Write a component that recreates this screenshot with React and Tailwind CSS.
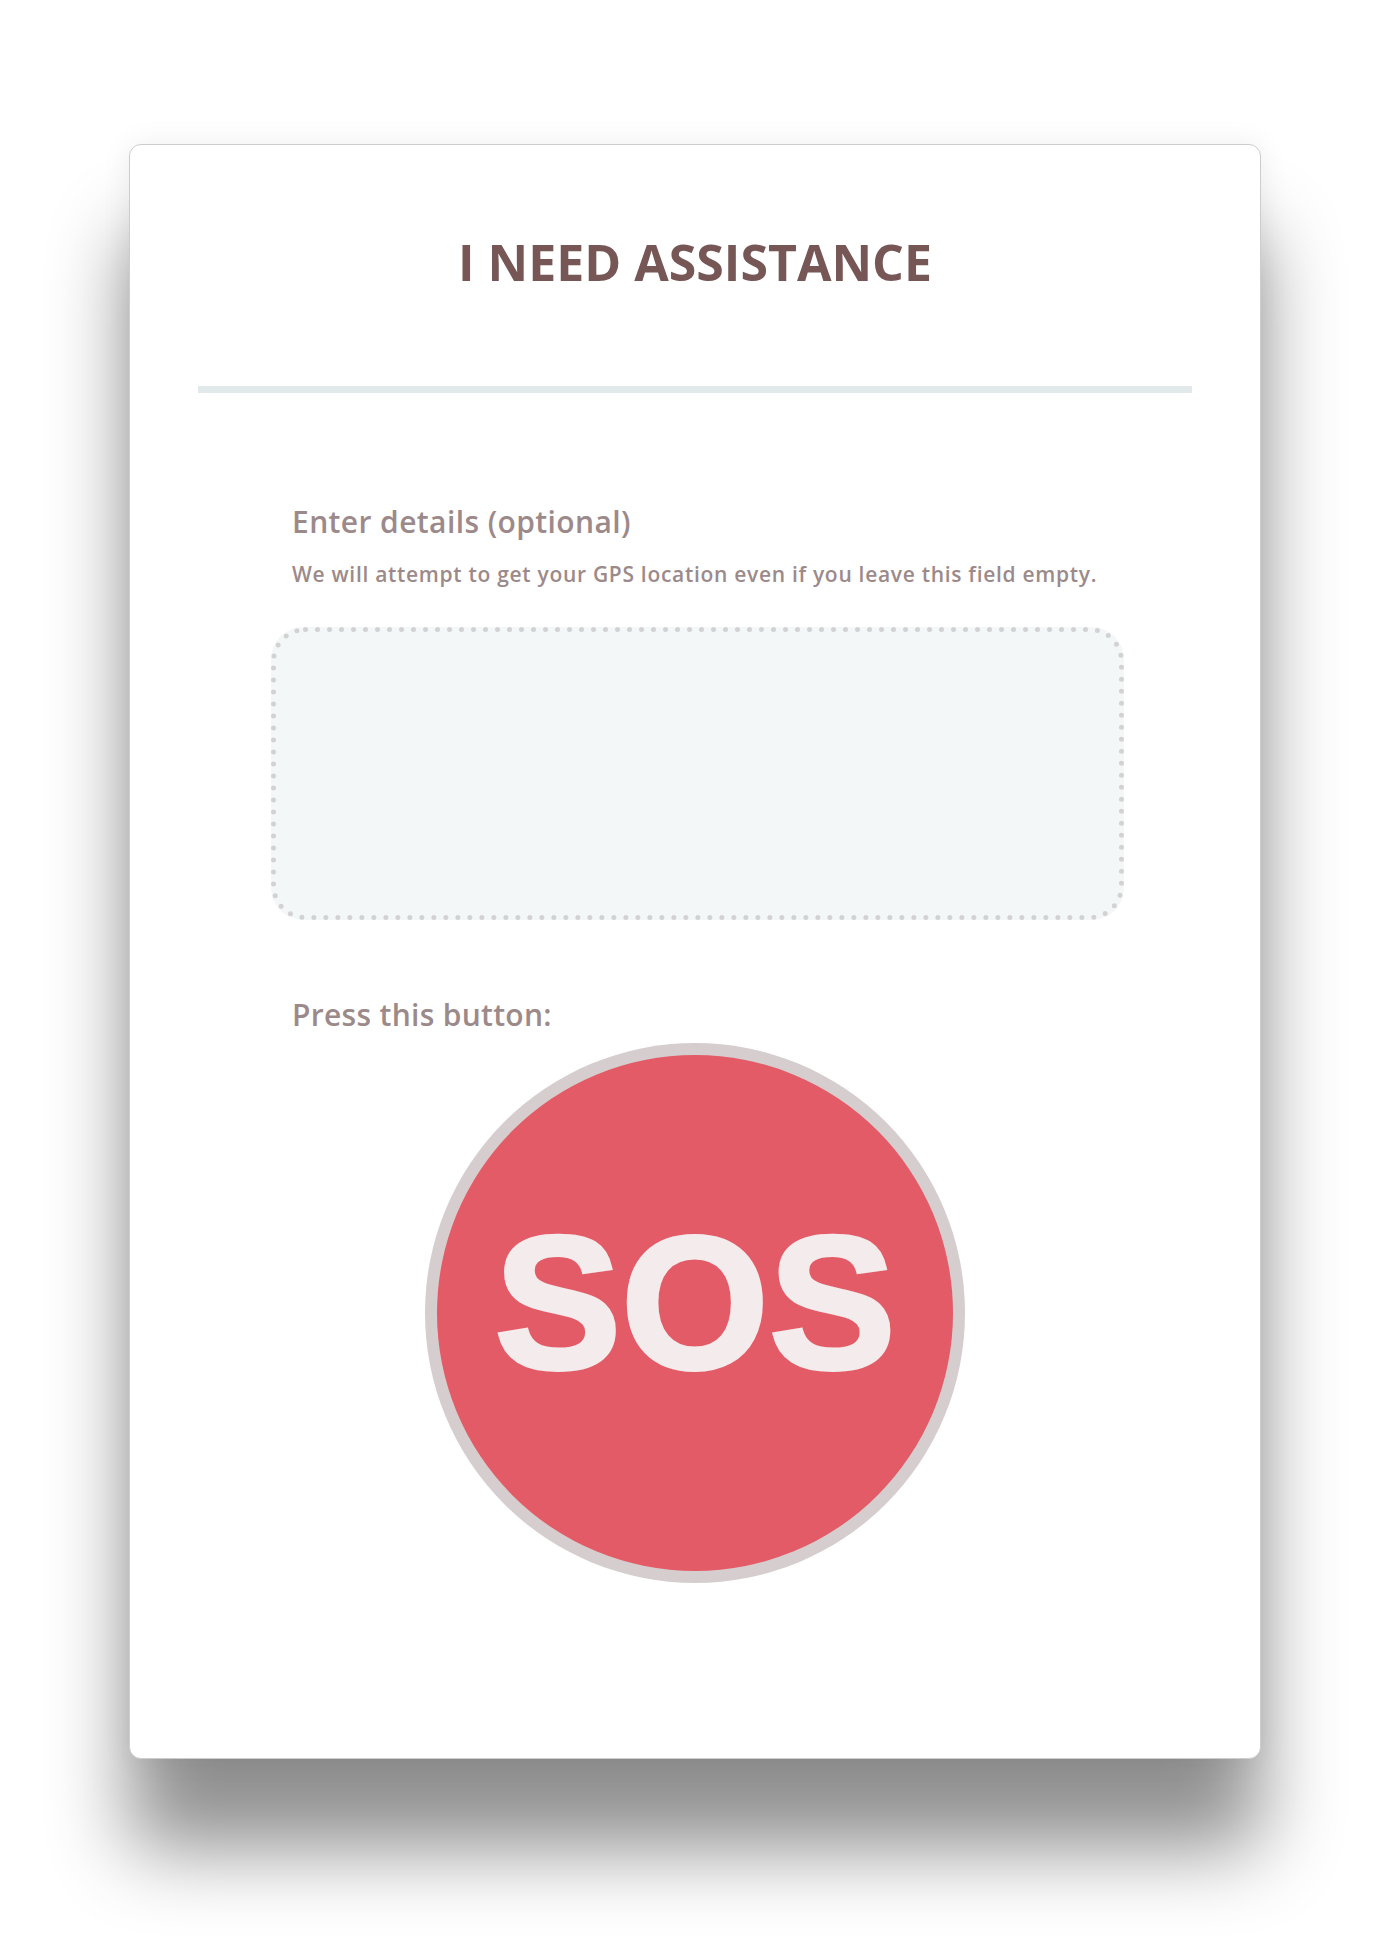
import React from "react";

export default function App() {
  return (
    <div
      className="min-h-[1958px] w-full bg-white pt-[144px]"
      style={{ fontFamily: '"Open Sans", "Liberation Sans", sans-serif' }}
    >
      <div className="mx-auto h-[1615px] w-[1132px] rounded-[12px] border border-[#cdcdcd] bg-white px-[68px] pt-[92px] shadow-[0_90px_80px_rgba(0,0,0,0.44),0_0_30px_rgba(0,0,0,0.07)]">
        <h1 className="text-center text-[50px] font-bold leading-[50px] text-[#775656]">
          I NEED ASSISTANCE
        </h1>
        <div className="mt-[99px] h-[7px] bg-[#e1e9eb]" />

        <div className="ml-[73px] mt-[114px] w-[853px]">
          <div className="pl-[21px] text-[#9c8a8a]">
            <p className="text-[30px] font-semibold leading-[30px] tracking-[0.4px]">
              Enter details (optional)
            </p>
            <p className="mt-[27px] text-[21px] font-semibold leading-[21px] tracking-[0.7px]">
              We will attempt to get your GPS location even if you leave this field empty.
            </p>
          </div>

          <div className="relative mt-[42px] h-[293px] w-[853px] rounded-[32px] bg-[#f4f7f8]">
            <svg
              className="absolute inset-0"
              width="853"
              height="293"
              viewBox="0 0 853 293"
            >
              <rect
                x="2.5"
                y="2.5"
                width="848"
                height="288"
                rx="32"
                fill="none"
                stroke="#d2d2d2"
                strokeWidth="5"
                strokeDasharray="0 12"
                strokeLinecap="round"
              />
            </svg>
          </div>

          <p className="mt-[80px] pl-[21px] text-[30px] font-semibold leading-[30px] tracking-[0.3px] text-[#9c8a8a]">
            Press this button:
          </p>
        </div>

        <div className="mx-auto mt-[13px] flex h-[540px] w-[540px] items-center justify-center rounded-full bg-[#d6cece] p-[12px]">
          <div className="flex h-full w-full items-center justify-center rounded-full bg-[#e35b66]">
            <span
              className="mb-[22px] text-[190px] font-bold leading-[190px] text-[#f4ecec] [-webkit-text-stroke:4px_#f4ecec]"
              style={{ fontFamily: '"Liberation Sans", Arial, sans-serif' }}
            >
              SOS
            </span>
          </div>
        </div>
      </div>
    </div>
  );
}
